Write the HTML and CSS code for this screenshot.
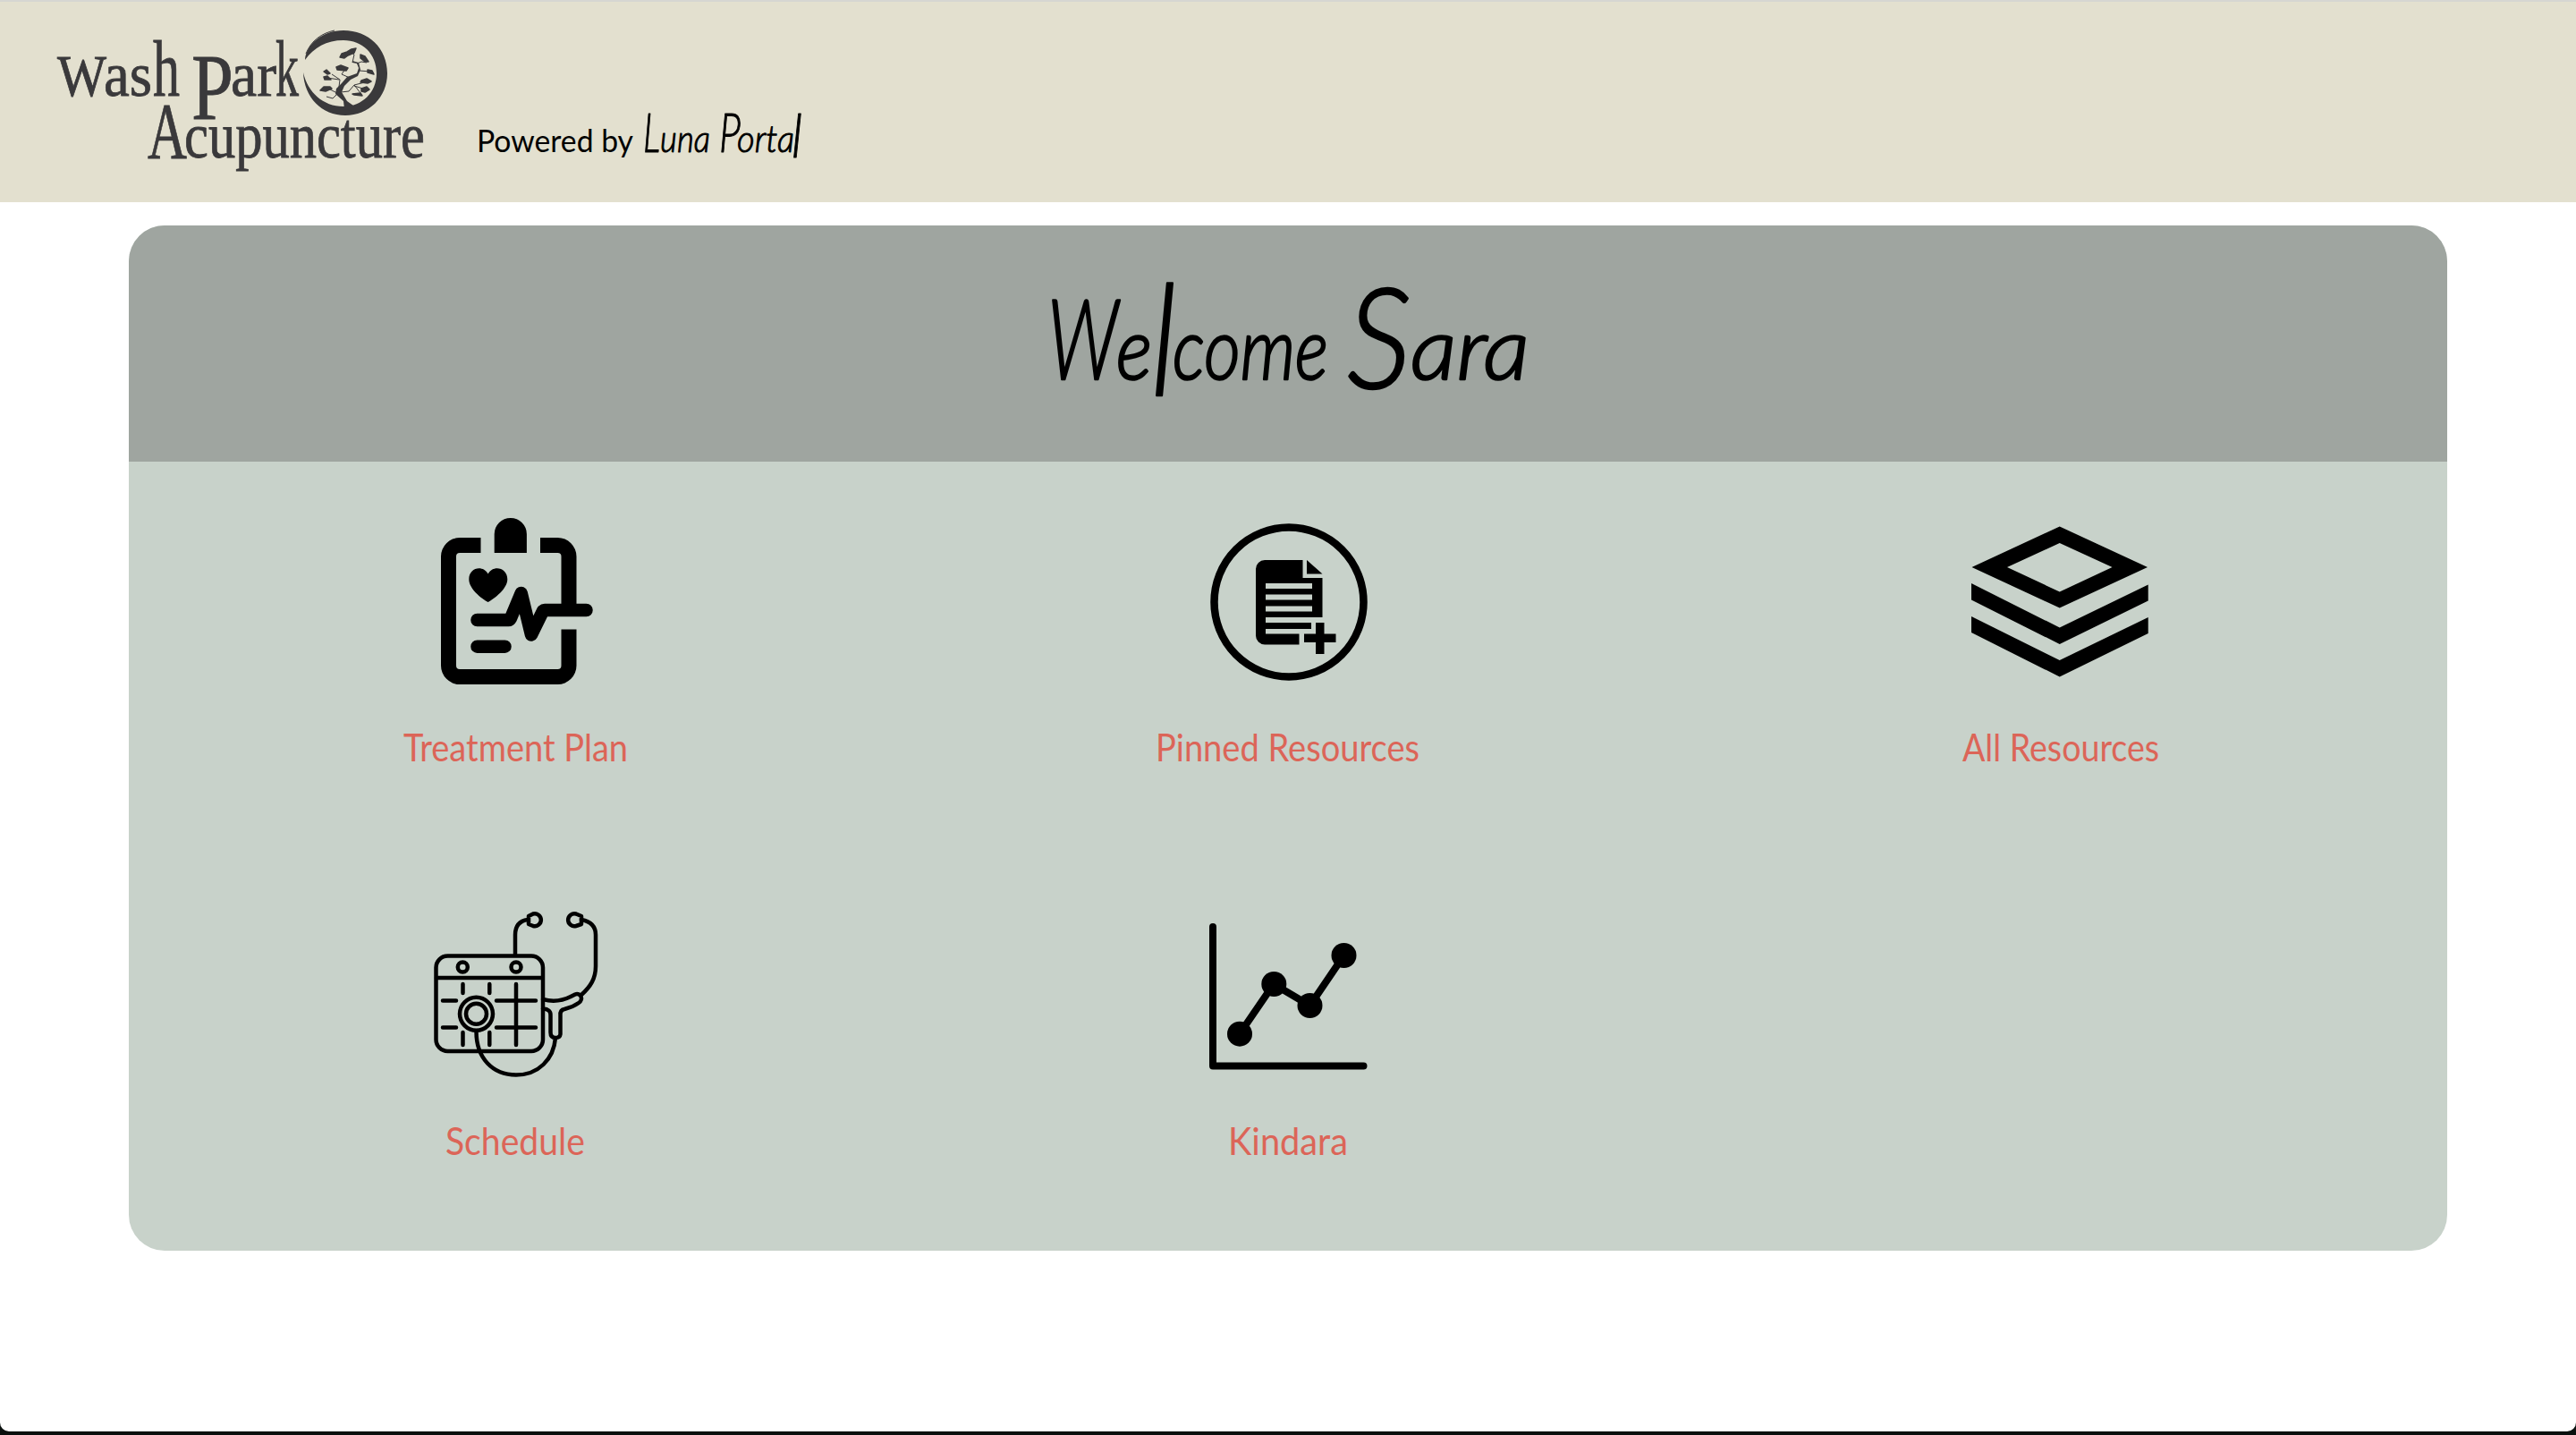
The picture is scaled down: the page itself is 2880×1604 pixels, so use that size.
FILE: index.html
```html
<!DOCTYPE html>
<html lang="en">
<head>
<meta charset="utf-8">
<title>Luna Portal</title>
<link rel="stylesheet" href="styles.css">
</head>
<body>
<div class="page">
  <header class="header">
    <svg class="logo" viewBox="60 30 420 170" role="img" aria-label="Wash Park Acupuncture">
      <g class="logo-text">
        <text y="107"><tspan x="64" font-size="65" textLength="55" lengthAdjust="spacingAndGlyphs">W</tspan><tspan x="116" font-size="70" textLength="54" lengthAdjust="spacingAndGlyphs">as</tspan><tspan x="171" font-size="88" textLength="30" lengthAdjust="spacingAndGlyphs">h</tspan></text>
        <text><tspan x="214" y="133" font-size="106" textLength="47" lengthAdjust="spacingAndGlyphs">P</tspan><tspan x="258" y="107" font-size="70" textLength="51" lengthAdjust="spacingAndGlyphs">ar</tspan><tspan x="308" y="107" font-size="88" textLength="26" lengthAdjust="spacingAndGlyphs">k</tspan></text>
        <text y="176"><tspan x="165" font-size="89" textLength="44" lengthAdjust="spacingAndGlyphs">A</tspan><tspan x="206" font-size="71" textLength="269" lengthAdjust="spacingAndGlyphs">cupuncture</tspan></text>
      </g>
      <g class="logo-mark">
        <path d="M341 67C342 50 360 34 384 34C412 34 433 54 433 82C433 109 412 129 386 129C360 129 340 109 339 81C344 103 361 119 384 119C405 119 421 103 421 82C421 60 405 45 384 45C365 45 351 53 341 67Z"/>
        <path class="brush" d="M342 60C348 45 360 37 374 34M341 90C346 107 358 120 376 126"/>
        <path d="M385 122L384 113L375 105L376 99L382 93L388 86L399 82L401 76L399 71L394 70L394 68L401 70L403 78L400 85L392 89L385 96L382 103L388 113L395 118L404 119L398 125Z"/>
        <path class="twig" d="M394 70L396 61L392 58M399 71L404 69L410 70M402 79L414 80M391 87L382 83L386 77M379 97L380 89L371 83M379 89L366 87M377 104L371 101L365 98M376 106L372 110L365 108M381 103L390 102L396 95L408 92M396 95L403 104M396 96L409 100"/>
        <path class="leaves" d="M380 64L382 60L388 58L393 55L398 54L396 59L389 62L385 65ZM403 61L408 63L412 69L408 69L403 65ZM376 75L381 73L389 76L387 79L377 78ZM362 80L365 78L369 82L366 83ZM362 86L366 85L370 89L363 89ZM358 101L362 97L369 97L371 99L364 102ZM411 78L416 79L418 83L411 81ZM404 90L410 88L415 91L411 93L403 92ZM404 99L410 97L413 100L408 103L404 102ZM394 105L403 104L405 107L396 106Z"/>
      </g>
    </svg>
    <svg class="powered" viewBox="530 110 380 80">
      <text class="sans" x="533" y="170" font-size="35" textLength="175" lengthAdjust="spacingAndGlyphs">Powered by</text>
      <text class="script" y="170"><tspan x="719" font-size="61" textLength="19" lengthAdjust="spacingAndGlyphs">L</tspan><tspan x="738" font-size="41" textLength="56" lengthAdjust="spacingAndGlyphs">una</tspan></text>
      <text class="script" y="170"><tspan x="804" font-size="61" textLength="24" lengthAdjust="spacingAndGlyphs">P</tspan><tspan x="824" font-size="41" textLength="64" lengthAdjust="spacingAndGlyphs">orta</tspan><tspan x="885" y="176" font-size="68" textLength="12" lengthAdjust="spacingAndGlyphs">l</tspan></text>
    </svg>
  </header>
  <main class="card">
    <h1 class="welcome">
      <svg class="welcome-text" viewBox="1160 300 560 180">
        <text class="script large" y="424"><tspan x="1171" font-size="124" textLength="79" lengthAdjust="spacingAndGlyphs">W</tspan><tspan x="1248" font-size="96" textLength="40" lengthAdjust="spacingAndGlyphs">e</tspan><tspan x="1287" y="442" font-size="172" textLength="28" lengthAdjust="spacingAndGlyphs">l</tspan><tspan x="1311" y="424" font-size="96" textLength="174" lengthAdjust="spacingAndGlyphs">come</tspan></text>
        <text class="script large" y="424"><tspan x="1506" y="434" font-size="156" textLength="72" lengthAdjust="spacingAndGlyphs">S</tspan><tspan x="1577" y="424" font-size="96" textLength="133" lengthAdjust="spacingAndGlyphs">ara</tspan></text>
      </svg>
    </h1>
    <nav class="tiles">
      <a class="tile">
        <svg class="icon" viewBox="476 573 200 200">
          <path d="M537.5 601H514a21 21 0 0 0-21 21V744a21 21 0 0 0 21 21H623.500a21 21 0 0 0 21-21V703.500H627.500V744q0 4-4 4H514q-4 0-4-4V622q0-4 4-4H537.500ZM604 601H623.500a21 21 0 0 1 21 21V680H627.500V622q0-4-4-4H604ZM552.700 618V597a18 18 0 0 1 36.200 0V618Z"/>
          <path d="M545.700 673C538 669 524.300 658 524.300 647.500C524.300 634 540 631 545.700 641.500C551 631 567.300 634 567.300 647.500C567.300 658 553 669 545.700 673Z"/>
          <path class="pulse" d="M533.500 693H568.500Q570 693 571 691L582.700 663L594 709.500L607 683Q608 682 609 682H655.500M533.500 722.700H564.500"/>
        </svg>
        <span class="label" style="width:251px"><svg viewBox="0 0 251 50"><text x="0" y="40" textLength="251" lengthAdjust="spacingAndGlyphs">Treatment Plan</text></svg></span>
      </a>
      <a class="tile">
        <svg class="icon" viewBox="1340 573 200 200">
          <circle class="ring" cx="1441" cy="673" r="83.500"/>
          <path fill-rule="evenodd" d="M1413 626H1456.500V646H1478.500V690H1415V696H1466V703H1415V708.500H1452.500V720.500H1414a10 10 0 0 1-10-10V636a10 10 0 0 1 10-10ZM1415 652V658H1467V652ZM1415 664.500V670.500H1467V664.500ZM1415 677.500V683.500H1467V677.500ZM1461 626L1478.500 641.500H1461ZM1471 696H1480.500V708.500H1493.500V718H1480.500V731H1471V718H1458V708.500H1471Z"/>
        </svg>
        <span class="label" style="width:296px"><svg viewBox="0 0 296 50"><text x="0" y="40" textLength="295" lengthAdjust="spacingAndGlyphs">Pinned Resources</text></svg></span>
      </a>
      <a class="tile">
        <svg class="icon" viewBox="2204 573 200 200">
          <path fill-rule="evenodd" d="M2302.700 588.500L2401 634L2302.700 679.500L2204.500 634ZM2302.700 607L2244 634L2302.700 661.500L2361.500 634ZM2204 652L2302.700 701.500L2401.700 653.500V671.500L2302.700 720L2204 670.500ZM2204 689L2302.700 738L2401.700 690V708L2302.700 756.500L2204 707Z"/>
        </svg>
        <span class="label" style="width:220px"><svg viewBox="0 0 220 50"><text x="0" y="40" textLength="220" lengthAdjust="spacingAndGlyphs">All Resources</text></svg></span>
      </a>
      <a class="tile">
        <svg class="icon line" viewBox="476 1013 200 200">
          <rect x="487.500" y="1068.500" width="119.500" height="106.500" rx="13"/>
          <path d="M488 1093H606M576 1067V1045Q576 1030 590 1028M650 1028Q666 1031 666 1045V1080C666 1094 660 1103 650 1112"/>
          <path d="M591 1024L596 1021.500A7 7 0 1 1 596 1035L591 1033ZM650 1024L644 1021.500A7 7 0 1 0 644 1035L650 1033Z"/>
          <circle cx="517.300" cy="1081" r="5.500"/><circle cx="577" cy="1081" r="5.500"/>
          <circle cx="532.500" cy="1133.300" r="18.500"/><circle cx="532.500" cy="1133.300" r="11.500"/>
          <path d="M517.500 1100V1110M547.300 1100V1110M577 1100V1168M495 1118.500H510M555 1118.500H599M495 1148.500H510M555 1148.500H599M517.500 1154V1168M547.300 1154V1168"/>
          <path d="M532.500 1153C532.500 1183 551 1201.500 577 1201.500C602 1201.500 619 1184 621 1160M607 1117C618 1120 628 1119 638 1114L643 1111.500C649 1109 653 1117 647 1121C640 1126 635 1127 631 1128Q626 1129 626.500 1135V1156Q626 1160 621 1160Q615.500 1160 615.500 1154V1135Q616 1128 607 1127.500"/>
        </svg>
        <span class="label" style="width:156px"><svg viewBox="0 0 156 50"><text x="0" y="40" textLength="156" lengthAdjust="spacingAndGlyphs">Schedule</text></svg></span>
      </a>
      <a class="tile">
        <svg class="icon" viewBox="1340 1013 200 200">
          <path class="axis" d="M1356 1036V1191.500H1524.500"/>
          <path class="axis" d="M1386 1155.500L1424 1100L1464.500 1124L1502.500 1068"/>
          <circle cx="1386" cy="1155.700" r="14"/><circle cx="1424.300" cy="1100" r="14"/><circle cx="1464.500" cy="1124" r="14"/><circle cx="1502.500" cy="1068" r="14"/>
        </svg>
        <span class="label" style="width:135px"><svg viewBox="0 0 135 50"><text x="0" y="40" textLength="134" lengthAdjust="spacingAndGlyphs">Kindara</text></svg></span>
      </a>
    </nav>
  </main>
</div>
</body>
</html>
```
FILE: styles.css
```css
* { box-sizing: border-box; }
html { background: #0a100e; }
body { margin: 0; height: 1604px; overflow: hidden; font-family: Lato, sans-serif; }
svg { display: block; overflow: visible; }
.page { height: 1600px; background: #fff; border-radius: 0 0 10px 10px; overflow: hidden; }
.header { height: 226px; padding: 28px 0 0 60px; display: flex; gap: 50px; background: #e3e0cf; border-top: 2px solid #d6d6d2; }
.logo { width: 420px; height: 170px; }
.powered { width: 380px; height: 80px; margin-top: 80px; }
.logo-text { font-family: "Liberation Serif", serif; fill: #3a393b; stroke: #3a393b; stroke-width: .8; }
.logo-mark { fill: #3a393b; }
.brush, .twig { fill: none; stroke: #3a393b; stroke-width: 1; }
.leaves { stroke: #3a393b; stroke-width: 1.5; stroke-linejoin: round; }
.sans { font-family: Lato, sans-serif; font-weight: 400; }
.script { font-family: Lato, sans-serif; font-style: italic; font-weight: 300; stroke: #000; stroke-width: 1; stroke-linejoin: round; }
.large { stroke-width: 2.5; }
.card { width: 2592px; height: 1146px; margin: 26px auto 0; background: #c8d2ca; border-radius: 40px; overflow: hidden; }
.welcome { margin: 0; height: 264px; padding: 48px 0 0 1016px; background: #9fa5a0; }
.welcome-text { width: 560px; height: 180px; }
.tiles { display: grid; grid-template-columns: repeat(3, 864px); grid-auto-rows: 440px; }
.tile { display: flex; flex-direction: column; align-items: center; padding-top: 57px; }
.icon { width: 200px; height: 200px; }
.label { display: block; height: 50px; margin-top: 38px; }
.label svg { width: 100%; height: 50px; font-size: 42.5px; fill: #dc6558; }
.ring { fill: none; stroke: #000; stroke-width: 8.500; }
.pulse { fill: none; stroke: #000; stroke-width: 14.500; stroke-linecap: round; stroke-linejoin: round; }
.axis { fill: none; stroke: #000; stroke-width: 8; stroke-linecap: round; stroke-linejoin: round; }
.line { fill: none; stroke: #000; stroke-width: 4.500; stroke-linecap: round; stroke-linejoin: round; }
```
